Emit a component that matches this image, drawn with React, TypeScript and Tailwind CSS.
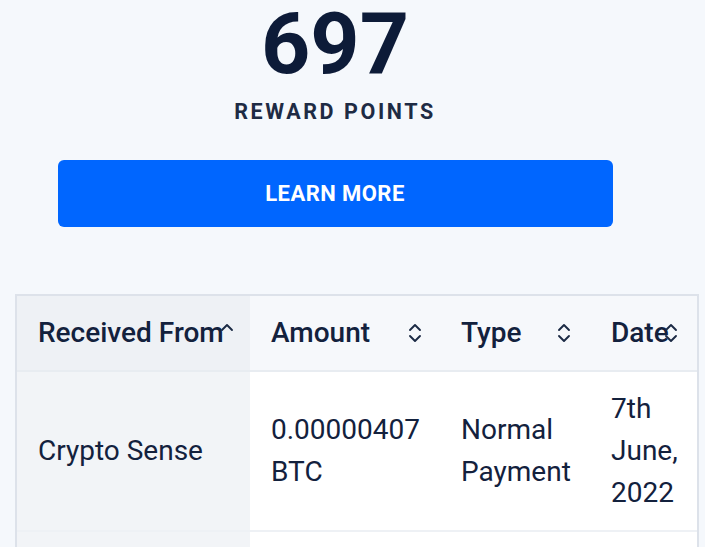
import { ReactNode } from 'react';

function SortIcon({ dir }: { dir?: 'asc' | 'desc' }) {
  return (
    <svg
      width="14"
      height="22"
      viewBox="0 0 14 22"
      fill="none"
      stroke="currentColor"
      strokeWidth="1.9"
      strokeLinecap="round"
      strokeLinejoin="round"
      className="text-[#1b2a44]"
    >
      {dir !== 'desc' && <path d="M2 8 7 3l5 5" />}
      {dir !== 'asc' && <path d="M2 14l5 5 5-5" />}
    </svg>
  );
}

interface HeadCellProps {
  label: string;
  width: string;
  dir?: 'asc' | 'desc';
  iconRight: string;
  sticky?: boolean;
}

function HeadCell({ label, width, dir, iconRight, sticky }: HeadCellProps) {
  return (
    <div
      className={`relative flex items-center whitespace-nowrap pl-[21px] py-4 leading-[42px] font-medium ${width} ${
        sticky ? 'bg-[#eef1f5]' : 'bg-[#f6f8fb]'
      }`}
    >
      {label}
      <span className={`absolute top-1/2 -translate-y-1/2 ${iconRight}`}>
        <SortIcon dir={dir} />
      </span>
    </div>
  );
}

function Cell({ children, width, sticky }: { children: ReactNode; width: string; sticky?: boolean }) {
  return (
    <div
      className={`flex items-center pl-[21px] py-4 leading-[42px] ${width} ${
        sticky ? 'bg-[#f2f4f7]' : 'bg-white'
      }`}
    >
      <div>{children}</div>
    </div>
  );
}

export default function App() {
  return (
    <div
      className="min-h-[547px] w-[705px] overflow-hidden bg-[#f5f8fc] text-[#13213d]"
      style={{ fontFamily: 'Roboto, "Liberation Sans", sans-serif' }}
    >
      {/* Points summary */}
      <div className="flex w-[670px] flex-col items-center">
        <div className="text-[86px] font-bold leading-[88px] text-[#0d1b38]">697</div>
        <div className="mt-[10px] text-[21.5px] font-bold leading-[28px] tracking-[0.12em] text-[#1e2b44]">
          REWARD POINTS
        </div>
        <button className="mt-[34px] flex h-[67px] w-[555px] items-center justify-center rounded-md bg-[#0066ff] text-[22px] font-bold tracking-[0.02em] text-white">
          LEARN MORE
        </button>
      </div>

      {/* Transactions table */}
      <div className="ml-[15px] mt-[67px] w-[684px] border-2 border-b-0 border-[#dde2ea] text-[28px]">
        <div className="flex border-b-2 border-[#e8ecf1]">
          <HeadCell label="Received From" width="w-[233px]" dir="asc" iconRight="right-[16px]" sticky />
          <HeadCell label="Amount" width="w-[190px]" iconRight="right-[18px]" />
          <HeadCell label="Type" width="w-[150px]" iconRight="right-[19px]" />
          <HeadCell label="Date" width="w-[107px]" iconRight="right-[19px]" />
        </div>
        <div className="flex border-b-2 border-[#eef1f5]">
          <Cell width="w-[233px]" sticky>
            Crypto Sense
          </Cell>
          <Cell width="w-[190px]">
            0.00000407
            <br />
            BTC
          </Cell>
          <Cell width="w-[150px]">
            Normal
            <br />
            Payment
          </Cell>
          <Cell width="w-[107px]">
            7th
            <br />
            June,
            <br />
            2022
          </Cell>
        </div>
        <div className="flex h-[40px]">
          <div className="w-[233px] bg-[#f2f4f7]" />
          <div className="flex-1 bg-white" />
        </div>
      </div>
    </div>
  );
}
